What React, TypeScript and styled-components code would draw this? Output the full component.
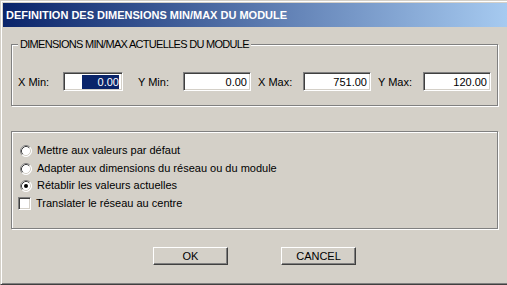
import React from "react";
import styled, { createGlobalStyle } from "styled-components";

const GlobalStyle = createGlobalStyle`
  html, body {
    margin: 0;
    padding: 0;
    background: #d4d0c8;
    overflow: hidden;
  }
  body {
    font-family: "Liberation Sans", Arial, sans-serif;
    font-size: 11px;
    color: #000;
  }
`;

interface DimField {
  label: string;
  value: string;
  width: number;
  selected?: boolean;
}

const fields: DimField[] = [
  { label: "X Min:", value: "0.00", width: 60, selected: true },
  { label: "Y Min:", value: "0.00", width: 68 },
  { label: "X Max:", value: "751.00", width: 68 },
  { label: "Y Max:", value: "120.00", width: 68 },
];

const options = [
  { label: "Mettre aux valeurs par défaut", checked: false },
  { label: "Adapter aux dimensions du réseau ou du module", checked: false },
  { label: "Rétablir les valeurs actuelles", checked: true },
];

const Radio: React.FC<{ checked: boolean }> = ({ checked }) => (
  <RadioIcon width="12" height="12" viewBox="0 0 12 12">
    <circle cx="6" cy="6" r="5.5" fill="#fff" />
    <path d="M2.11 9.89 A5.5 5.5 0 0 1 9.89 2.11" fill="none" stroke="#808080" />
    <path d="M9.89 2.11 A5.5 5.5 0 0 1 2.11 9.89" fill="none" stroke="#fff" />
    <path d="M2.82 9.18 A4.5 4.5 0 0 1 9.18 2.82" fill="none" stroke="#404040" />
    <path d="M9.18 2.82 A4.5 4.5 0 0 1 2.82 9.18" fill="none" stroke="#d4d0c8" />
    {checked && <circle cx="6" cy="6" r="2" fill="#000" />}
  </RadioIcon>
);

const App: React.FC = () => {
  return (
    <>
      <GlobalStyle />
      <Window>
        <TitleBar>DEFINITION DES DIMENSIONS MIN/MAX DU MODULE</TitleBar>

        <Group $top={17} $height={62}>
          <Legend>DIMENSIONS MIN/MAX ACTUELLES DU MODULE</Legend>
          <FieldGrid>
            {fields.map((f) => (
              <FieldPair key={f.label}>
                <FieldLabel>{f.label}</FieldLabel>
                <Edit $width={f.width}>
                  {f.selected ? <Selection>{f.value}</Selection> : f.value}
                </Edit>
              </FieldPair>
            ))}
          </FieldGrid>
        </Group>

        <Group $top={25} $height={98}>
          <OptionList>
            {options.map((o) => (
              <OptionRow key={o.label} $indent={8}>
                <Radio checked={o.checked} />
                <OptionText>{o.label}</OptionText>
              </OptionRow>
            ))}
            <OptionRow $indent={6}>
              <CheckBox />
              <OptionText>Translater le réseau au centre</OptionText>
            </OptionRow>
          </OptionList>
        </Group>

        <ButtonRow>
          <Button>OK</Button>
          <Button>CANCEL</Button>
        </ButtonRow>
      </Window>
    </>
  );
};

export default App;

const Window = styled.div`
  width: 507px;
  height: 285px;
  box-sizing: border-box;
  background: #d4d0c8;
  border-top: 1px solid #d4d0c8;
  border-left: 1px solid #d4d0c8;
  border-bottom: 1px solid #404040;
  box-shadow: inset 1px 1px #fff, inset 0 -1px #808080;
  padding: 2px 0 0 2px;
  display: flex;
  flex-direction: column;
`;

const TitleBar = styled.div`
  height: 24px;
  flex: none;
  display: flex;
  align-items: center;
  padding-left: 3px;
  background: linear-gradient(to right, #0a246a, #a6caf0);
  color: #fff;
  font-weight: bold;
  font-size: 11px;
  white-space: nowrap;
`;

const Group = styled.div<{ $top: number; $height: number }>`
  position: relative;
  flex: none;
  box-sizing: border-box;
  margin: ${(p) => p.$top}px 9px 0 8px;
  height: ${(p) => p.$height}px;
  border: 1px solid #808080;
  box-shadow: inset 1px 1px #fff, 1px 1px #fff;
`;

const Legend = styled.span`
  position: absolute;
  top: -7px;
  left: 6px;
  padding: 0 2px;
  background: #d4d0c8;
  line-height: 13px;
  letter-spacing: -0.7px;
  white-space: nowrap;
`;

const FieldGrid = styled.div`
  display: grid;
  grid-template-columns: repeat(4, 120px);
  padding: 27px 0 0 6px;
`;

const FieldPair = styled.div`
  display: flex;
  align-items: center;
`;

const FieldLabel = styled.span`
  width: 45px;
  flex: none;
  white-space: nowrap;
`;

const Edit = styled.div<{ $width: number }>`
  width: ${(p) => p.$width}px;
  height: 19px;
  box-sizing: border-box;
  flex: none;
  display: flex;
  align-items: center;
  justify-content: flex-end;
  padding-right: 3px;
  background: #fff;
  border: 1px solid;
  border-color: #808080 #fff #fff #808080;
  box-shadow: inset 1px 1px #404040, inset -1px -1px #d4d0c8;
`;

const Selection = styled.span`
  display: inline-block;
  height: 14px;
  line-height: 14px;
  padding-left: 16px;
  background: #0a246a;
  color: #fff;
`;

const OptionList = styled.div`
  display: flex;
  flex-direction: column;
  padding-top: 10px;
`;

const OptionRow = styled.div<{ $indent: number }>`
  height: 17.5px;
  display: flex;
  align-items: center;
  padding-left: ${(p) => p.$indent}px;
`;

const RadioIcon = styled.svg`
  flex: none;
  margin-top: 1px;
`;

const CheckBox = styled.span`
  width: 13px;
  height: 13px;
  box-sizing: border-box;
  flex: none;
  margin-top: 1px;
  background: #fff;
  border: 1px solid;
  border-color: #808080 #fff #fff #808080;
  box-shadow: inset 1px 1px #404040, inset -1px -1px #d4d0c8;
`;

const OptionText = styled.span`
  margin-left: 5px;
  line-height: 13px;
  white-space: nowrap;
`;

const ButtonRow = styled.div`
  display: flex;
  justify-content: center;
  gap: 53px;
  margin-top: 18px;
  padding-right: 1px;
`;

const Button = styled.button`
  width: 75px;
  height: 18px;
  box-sizing: border-box;
  padding: 0;
  font-family: "Liberation Sans", Arial, sans-serif;
  font-size: 11px;
  color: #000;
  background: #d4d0c8;
  border: 1px solid;
  border-color: #fff #404040 #404040 #fff;
  box-shadow: inset -1px -1px #808080;
  border-radius: 0;
`;
